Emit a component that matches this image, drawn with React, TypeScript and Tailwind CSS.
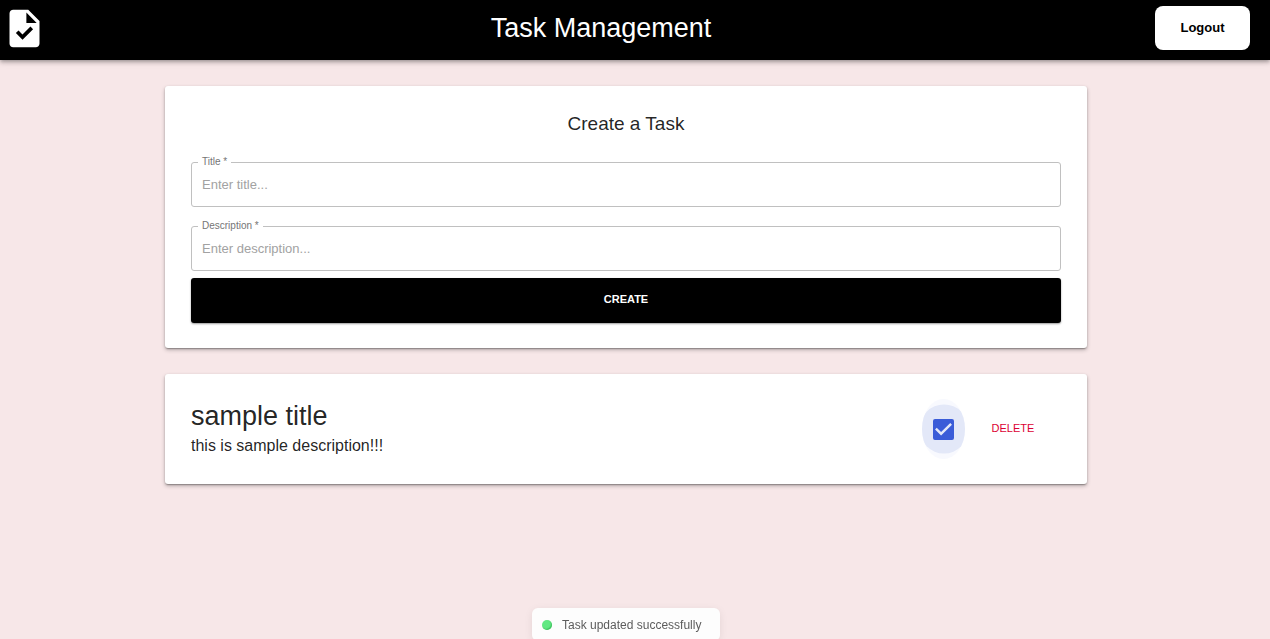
import { useState } from "react";
import { MdTask } from "react-icons/md";

const cardClass =
  "w-full rounded-[3px] bg-white px-[26px] shadow-[0_2px_1px_-1px_rgba(0,0,0,0.16),0_1px_2px_0_rgba(0,0,0,0.2),0_2px_4px_0_rgba(0,0,0,0.24)]";

function Header() {
  return (
    <header className="flex items-start justify-between bg-black pt-1.5 pr-5 pb-[9px] pl-0.5 shadow-[0_2px_3px_-1px_rgba(0,0,0,0.2),0_3px_4px_0_rgba(0,0,0,0.14),0_1px_8px_0_rgba(0,0,0,0.12)]">
      <MdTask className="size-[45px] text-white" aria-hidden="true" />
      <h1 className="text-[27px] leading-[44px] text-white">Task Management</h1>
      <button
        type="button"
        className="h-11 w-[95px] rounded-[8px] bg-white text-[13px] font-bold text-black"
      >
        Logout
      </button>
    </header>
  );
}

interface TextFieldProps {
  id: string;
  label: string;
  placeholder: string;
}

function TextField({ id, label, placeholder }: TextFieldProps) {
  return (
    <fieldset className="min-w-0 rounded-[3px] border border-[#c0c0c0] px-1.5 pb-[5px]">
      <legend className="px-1 text-[10px] leading-3 text-[#757575]">
        <label htmlFor={id} className="block">
          {label} *
        </label>
      </legend>
      <input
        id={id}
        type="text"
        required
        placeholder={placeholder}
        className="block h-[33px] w-full px-1 text-[13px] text-black/87 outline-none placeholder:text-[#a2a2a2]"
      />
    </fieldset>
  );
}

function CreateTask() {
  return (
    <section className={`${cardClass} pt-[26px] pb-[25px]`}>
      <h2 className="text-center text-[19px] leading-6 text-black/87">Create a Task</h2>
      <form className="mt-5 flex flex-col" onSubmit={(e) => e.preventDefault()}>
        <div className="flex flex-col gap-[13px]">
          <TextField id="title" label="Title" placeholder="Enter title..." />
          <TextField id="description" label="Description" placeholder="Enter description..." />
        </div>
        <button
          type="submit"
          className="mt-[7px] h-[45px] rounded-[3px] bg-black pb-0.5 text-[11px] font-bold text-white uppercase shadow-[0_1px_2px_0_rgba(0,0,0,0.4)]"
        >
          Create
        </button>
      </form>
    </section>
  );
}

function TaskCard() {
  const [done, setDone] = useState(true);
  return (
    <article className={`${cardClass} flex items-stretch py-[25px]`}>
      <div className="min-w-0 flex-1">
        <h3 className="text-[27px] leading-[34px] text-black/87">sample title</h3>
        <p className="text-[16px] leading-[26px] text-black/87">this is sample description!!!</p>
      </div>
      <div className="flex items-center">
        <div className="relative grid h-full w-[43px] place-items-center overflow-hidden rounded-[50%] bg-[#f8f9fe]">
          <span className="absolute top-1/2 left-1/2 size-[49px] -translate-1/2 rounded-full bg-[#e3e8f8]" />
          <input
            type="checkbox"
            aria-label="Task completed"
            checked={done}
            onChange={(e) => setDone(e.target.checked)}
            className="z-10 col-start-1 row-start-1 size-[21px] appearance-none rounded-[2px] border-2 border-[#3a5cd8] checked:bg-[#3a5cd8]"
          />
          {done && (
            <svg
              viewBox="0 0 24 24"
              className="pointer-events-none z-20 col-start-1 row-start-1 size-[29px] fill-[#e3e8f8]"
              aria-hidden="true"
            >
              <path d="M10 17l-5-5 1.41-1.41L10 14.17l7.59-7.59L19 8l-9 9z" />
            </svg>
          )}
        </div>
        <button type="button" className="h-8 w-24 pb-0.5 text-[11px] text-[#dc0032] uppercase">
          Delete
        </button>
      </div>
    </article>
  );
}

function Toast() {
  return (
    <div
      role="status"
      className="fixed -bottom-0.5 left-1/2 flex h-[33px] min-w-[188px] -translate-x-[103px] items-center gap-2.5 rounded-[6px] bg-[#fdfdfd] pr-4 pl-2.5 shadow-[0_2px_8px_0_rgba(0,0,0,0.08)]"
    >
      <span className="size-2.5 rounded-full bg-[#61e882] shadow-[inset_-1px_-1px_1px_rgba(30,160,60,0.5)]" />
      <span className="text-[12px] text-[#5c5c5c]">Task updated successfully</span>
    </div>
  );
}

export default function App() {
  return (
    <div className="min-h-screen bg-[#f7e7e8] font-['Liberation_Sans',Arial,sans-serif]">
      <Header />
      <main className="mr-[18px] flex justify-center py-[26px]">
        <div className="flex w-full max-w-[922px] flex-col gap-[26px]">
          <CreateTask />
          <TaskCard />
        </div>
      </main>
      <Toast />
    </div>
  );
}
